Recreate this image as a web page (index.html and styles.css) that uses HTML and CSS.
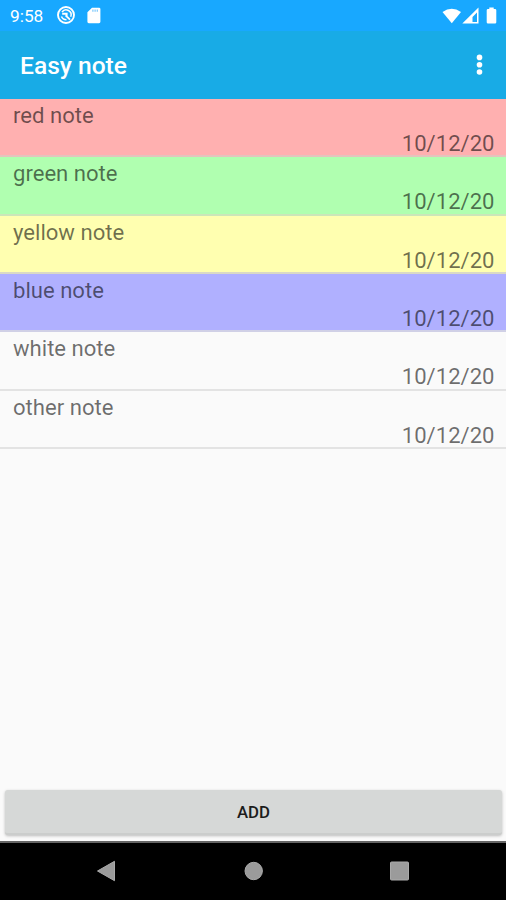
FILE: index.html
```html
<!DOCTYPE html>
<html lang="en">
<head>
<meta charset="utf-8">
<title>Easy note</title>
<link rel="stylesheet" href="styles.css">
</head>
<body>
<div class="screen">
  <div class="status">
    <span class="clock">9:58</span>
    <svg class="alert" width="20" height="20" viewBox="0 0 20 20" fill="none" stroke="#fff">
      <circle cx="10" cy="10" r="8" stroke-width="1.900"/>
      <path d="M6 7A5 5 0 0 1 14.700 11.800M5.500 11.500Q6.700 14.700 10.500 14.800" stroke-width="1.500"/>
      <path d="M6.200 8.800H10.600V11.500M9.600 10.400L14 14.600" stroke-width="2"/>
    </svg>
    <svg class="sd" width="14" height="17" viewBox="0 0 14 17">
      <path fill="#fff" d="M5 .7h7q1.400 0 1.400 1.400v12.700q0 1.400-1.400 1.400H1.800Q.4 16.200.4 14.800V5.300Z"/>
      <path fill="#7cc8fb" d="M5.300 2.600h1.200v2.200H5.300ZM7.500 2.600h1.200v2.200H7.500ZM9.700 2.600h1.200v2.200H9.700Z"/>
    </svg>
    <svg class="signals" width="56" height="18" viewBox="0 0 56 18">
      <path fill="#fff" d="M.5 5Q9.800-1.500 19 5L9.800 16.200Z"/>
      <path fill="#fff" fill-rule="evenodd" d="M36.500.5V16.500H20.300ZM35 5.500L30.500 10V14.900H35Z"/>
      <path fill="#fff" d="M47.300 2V.5h4.400V2H53q1.300 0 1.300 1.300v11.900q0 1.300-1.300 1.300h-7q-1.300 0-1.300-1.300V3.300Q44.700 2 46 2Z"/>
    </svg>
  </div>
  <header class="appbar">
    <h1>Easy note</h1>
    <svg width="8" height="24" viewBox="0 0 8 24" fill="#fff">
      <circle cx="4.500" cy="3.400" r="2.800"/>
      <circle cx="4.500" cy="10.700" r="2.800"/>
      <circle cx="4.500" cy="18" r="2.800"/>
    </svg>
  </header>
  <main class="notes">
    <div class="note red"><span>red note</span><time>10/12/20</time></div>
    <div class="note green"><span>green note</span><time>10/12/20</time></div>
    <div class="note yellow"><span>yellow note</span><time>10/12/20</time></div>
    <div class="note blue"><span>blue note</span><time>10/12/20</time></div>
    <div class="note"><span>white note</span><time>10/12/20</time></div>
    <div class="note"><span>other note</span><time>10/12/20</time></div>
  </main>
  <button class="add">ADD</button>
  <nav class="navbar">
    <svg width="506" height="57" viewBox="0 0 506 57" fill="#9b9b9b" stroke="#aaa">
      <path d="M97.500 28L114.500 18.300V37.700Z"/>
      <circle cx="253.700" cy="28" r="8.700"/>
      <rect x="390.500" y="19" width="18" height="18" rx="1"/>
    </svg>
  </nav>
</div>
</body>
</html>
```
FILE: styles.css
```css
* { box-sizing: border-box; }
body { margin: 0; font-family: Roboto, sans-serif; }
.screen {
  width: 506px;
  height: 900px;
  display: flex;
  flex-direction: column;
  background: #fafafa;
  overflow: hidden;
}
.status {
  height: 31px;
  flex: none;
  display: flex;
  align-items: flex-start;
  padding: 6px 8px 0 10px;
  background: #18a8ff;
  color: #fff;
}
.clock { width: 46px; font-size: 17.3px; line-height: 20px; }
.alert { margin-top: -1px; }
.sd { margin: 1px 0 0 11px; }
.signals { margin: 1px 0 0 auto; }
.appbar {
  height: 68px;
  flex: none;
  display: flex;
  align-items: center;
  justify-content: space-between;
  padding: 1px 23px 0 20px;
  background: #18abe6;
  color: #fff;
}
h1 { margin: 0; font-size: 24.6px; font-weight: 500; line-height: 28px; }
.notes { flex: 1; }
.note {
  height: 58.33px;
  display: flex;
  flex-direction: column;
  padding: 2px 11.5px 0 13px;
  border-bottom: 2px solid #e3e3e3;
  color: rgba(0, 0, 0, .57);
  font-size: 22.1px;
  line-height: 28px;
}
.note time { align-self: flex-end; }
.red { background: #ffb0b0; border-color: #e3c4bd; }
.green { background: #b0ffb0; border-color: #cce6b9; }
.yellow { background: #ffffb0; border-color: #dad9c5; }
.blue { background: #b0b0ff; border-color: #d0d0e6; }
.add {
  height: 45px;
  flex: none;
  margin: 0 4px 6px 5px;
  padding: 2px 0 0;
  border: 0;
  border-bottom: 2px solid #cbcdcc;
  border-radius: 3px;
  background: #d6d8d7;
  box-shadow: 0 1px 3px rgba(0, 0, 0, .25);
  color: #1c1c1c;
  font: 500 16.8px/41px Roboto, sans-serif;
}
.navbar { height: 59px; flex: none; background: #000; border-top: 2px solid #666; }
.navbar svg { display: block; }
```
